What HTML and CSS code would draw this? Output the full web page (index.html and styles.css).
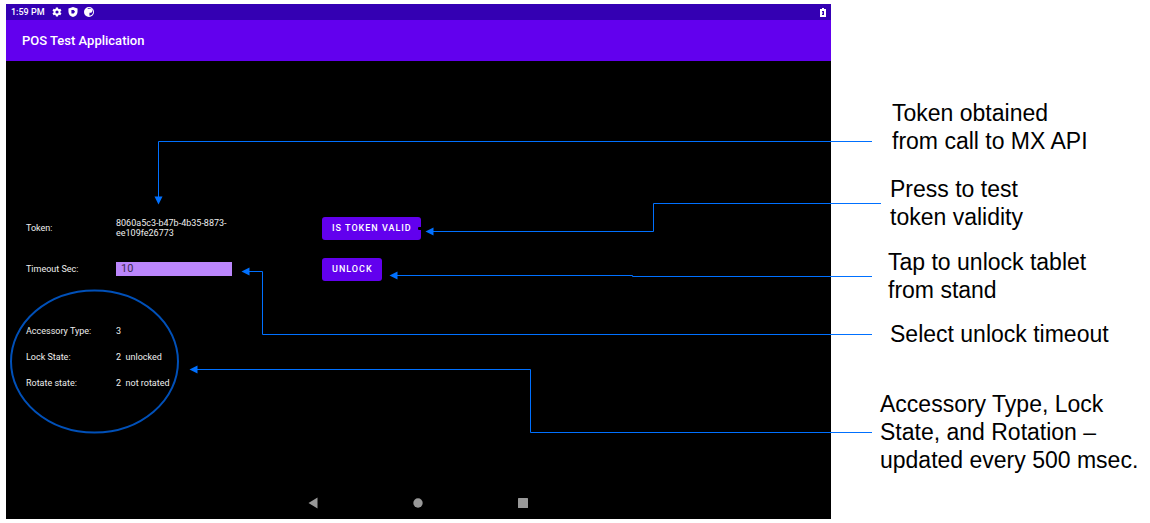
FILE: index.html
```html
<!DOCTYPE html>
<html lang="en">
<head>
<meta charset="utf-8">
<title>POS Test Application</title>
<link rel="stylesheet" href="styles.css">
</head>
<body>
<div class="page">
  <main class="tablet">
    <div class="status-bar">
      <span class="clock">1:59 PM</span>
      <svg class="status-icon" viewBox="1 1 22 22" aria-hidden="true"><path fill="#fff" fill-rule="evenodd" d="M19.400 13a7.500 7.500 0 0 0 0-2l2.100-1.700c.2-.1.300-.4.100-.6l-2-3.500c-.1-.2-.4-.3-.6-.2l-2.500 1a7 7 0 0 0-1.700-1L14.400 2.400a.5.5 0 0 0-.5-.4h-4c-.2 0-.5.2-.5.4L9 5a8 8 0 0 0-1.700 1l-2.500-1c-.2-.1-.5 0-.6.2l-2 3.500c-.1.200-.1.500.1.600L4.500 11a8 8 0 0 0 0 2l-2.200 1.700c-.2.100-.2.400-.1.600l2 3.500c.1.200.4.300.6.200l2.500-1q.8.600 1.700 1l.4 2.600c0 .2.300.4.500.4h4c.3 0 .5-.2.500-.4l.4-2.600q.9-.4 1.700-1l2.500 1c.2.100.5 0 .6-.2l2-3.500c.1-.2.100-.5-.1-.6zM12 15.500a3.500 3.500 0 1 1 0-7 3.500 3.500 0 0 1 0 7z"/></svg>
      <svg class="status-icon" viewBox="1 1 22 22" aria-hidden="true"><path fill="#fff" fill-rule="evenodd" d="M12 1L2 4.500v7c0 6 4 10 10 11.500 6-1.500 10-5.500 10-11.500v-7zM8.500 7.500h5l3 4-3 4h-5z"/></svg>
      <svg class="status-icon" viewBox="1 1 22 22" aria-hidden="true"><path fill="#fff" fill-rule="evenodd" d="M12 1a11 11 0 1 0 0 22 11 11 0 0 0 0-22zM9 5h6.500a4.500 4.500 0 0 1 1.500 8.500h-4V20c5-.5 8-4 8-8 0-5-4-9-9-9-1 0-2 .2-3 .5z"/><path fill="#fff" d="M11 7h5v5h-5z"/></svg>
      <svg class="battery-icon" viewBox="0 0 6 9" aria-hidden="true"><path fill="#fff" fill-rule="evenodd" d="M2 0h2v1h2v8H0V1h2zM2 3h2v4H2z"/><path fill="#fff" d="M2 4.500h1v1H2z"/></svg>
    </div>
    <header class="app-bar"><h1 class="app-title">POS Test Application</h1></header>
    <form class="form">
      <div class="row">
        <span>Token:</span>
        <output class="token">8060a5c3-b47b-4b35-8873-ee109fe26773</output>
        <button class="button button-notched" type="button">IS TOKEN VALID</button>
      </div>
      <div class="row">
        <label for="timeout">Timeout Sec:</label>
        <input class="timeout" id="timeout" type="text" value="10">
        <button class="button" type="button">UNLOCK</button>
      </div>
      <div class="states">
        <div class="row row-state"><span>Accessory Type:</span><output>3</output></div>
        <div class="row row-state"><span>Lock State:</span><output>2&nbsp; unlocked</output></div>
        <div class="row row-state"><span>Rotate state:</span><output>2&nbsp; not rotated</output></div>
      </div>
    </form>
    <nav class="nav-bar">
      <button class="nav-button" type="button" aria-label="Back"><svg class="nav-icon" viewBox="0 0 12 12"><path fill="#999" d="M1.500 6L10.500 .5v11z"/></svg></button>
      <button class="nav-button" type="button" aria-label="Home"><svg class="nav-icon" viewBox="0 0 12 12"><circle cx="6" cy="6" r="4.700" fill="#999"/></svg></button>
      <button class="nav-button" type="button" aria-label="Overview"><svg class="nav-icon" viewBox="0 0 12 12"><rect x="1" y="1" width="10" height="10" rx=".5" fill="#999"/></svg></button>
    </nav>
  </main>
  <aside class="notes">
    <p class="note note-token">Token obtained<br>from call to MX API</p>
    <p class="note note-press">Press to test<br>token validity</p>
    <p class="note note-unlock">Tap to unlock tablet<br>from stand</p>
    <p class="note note-timeout">Select unlock timeout</p>
    <p class="note note-states">Accessory Type, Lock<br>State, and Rotation –<br>updated every 500 msec.</p>
  </aside>
  <svg class="callouts" viewBox="0 0 1150 523" aria-hidden="true">
    <ellipse cx="94.500" cy="361.500" rx="83.500" ry="71" fill="none" stroke="#0050b8" stroke-width="2"/>
    <g fill="none" stroke="#0070ff" stroke-width="1">
      <path d="M872 141.500H158.500V197"/>
      <path d="M881 203.500H653.500V231.500H433"/>
      <path d="M872 276.500H632.500V275.500H397"/>
      <path d="M872 334.500H262.500V271.500H249"/>
      <path d="M872 432.500H530.500V369.500H197"/>
    </g>
    <g fill="#0070ff">
      <path d="M154.500 196.500h8l-4 8z"/>
      <path d="M433.500 227.500v8l-8-4z"/>
      <path d="M397.500 271.500v8l-8-4z"/>
      <path d="M249.500 267.500v8l-8-4z"/>
      <path d="M197.500 365.500v8l-8-4z"/>
    </g>
  </svg>
</div>
</body>
</html>
```
FILE: styles.css
```css
* { box-sizing: border-box; }

body {
  margin: 0;
  background: #fff;
  color: #000;
  font-family: "Liberation Sans", Arial, sans-serif;
}

.page {
  position: relative;
  display: flex;
  padding: 4px 0;
}

.tablet {
  flex: 1;
  display: flex;
  flex-direction: column;
  margin-left: 6px;
  background: #000;
  color: #eee;
  font: 9px/10px Roboto, sans-serif;
}

.status-bar {
  display: flex;
  align-items: center;
  gap: 6px;
  height: 16px;
  padding: 0 5px;
  background: #3400b3;
  color: #fff;
}

.clock { margin-right: 1px; font-weight: 500; }
.status-icon { width: 10px; height: 10px; }
.battery-icon { width: 6px; height: 9px; margin-left: auto; }

.app-bar {
  display: flex;
  align-items: center;
  height: 41px;
  padding: 0 16px;
  background: #6200ee;
  color: #fff;
}

.app-title { margin: 0; font-size: 13px; font-weight: 500; line-height: 16px; }

.form {
  display: flex;
  flex-direction: column;
  gap: 11px;
  padding: 152px 20px 91px;
}

.row {
  display: grid;
  grid-template-columns: 90px 116px 1fr;
  align-items: center;
  min-height: 30px;
}

.row-state { min-height: 26px; }
.states { margin-top: 23px; }

.timeout {
  width: 100%;
  height: 14px;
  padding: 0 5px;
  border: 0;
  background: #bb86fc;
  color: #3b2a50;
  font: 11px/14px Roboto, sans-serif;
}

.button {
  position: relative;
  justify-self: start;
  height: 23px;
  margin-left: 90px;
  padding: 0 9px 0 10px;
  border: 0;
  border-radius: 3px;
  background: #6200ee;
  color: #fff;
  font: 500 9px/12px Roboto, sans-serif;
  letter-spacing: 1px;
}

.button-notched::after {
  content: "";
  position: absolute;
  top: 10px;
  right: 0;
  width: 3px;
  height: 3px;
  border-radius: 1px 0 0 1px;
  background: #000;
}

.nav-bar {
  display: flex;
  justify-content: center;
  gap: 81px;
  height: 32px;
  padding-right: 2px;
}

.nav-button {
  display: grid;
  place-items: center;
  width: 24px;
  padding: 0;
  border: 0;
  background: none;
}

.nav-icon { width: 12px; height: 12px; }

.notes {
  flex: 0 0 319px;
  padding: 95px 0 0 49px;
  font-size: 23px;
  line-height: 28px;
}

.note { margin: 0 0 20px; }
.note-token { padding-left: 12px; }
.note-press { padding-left: 10px; margin-bottom: 17px; }
.note-unlock { padding-left: 8px; margin-bottom: 16px; }
.note-timeout { padding-left: 10px; margin-bottom: 42px; }

.callouts {
  position: absolute;
  top: 0;
  left: 0;
  width: 1150px;
  height: 523px;
  pointer-events: none;
}
```
